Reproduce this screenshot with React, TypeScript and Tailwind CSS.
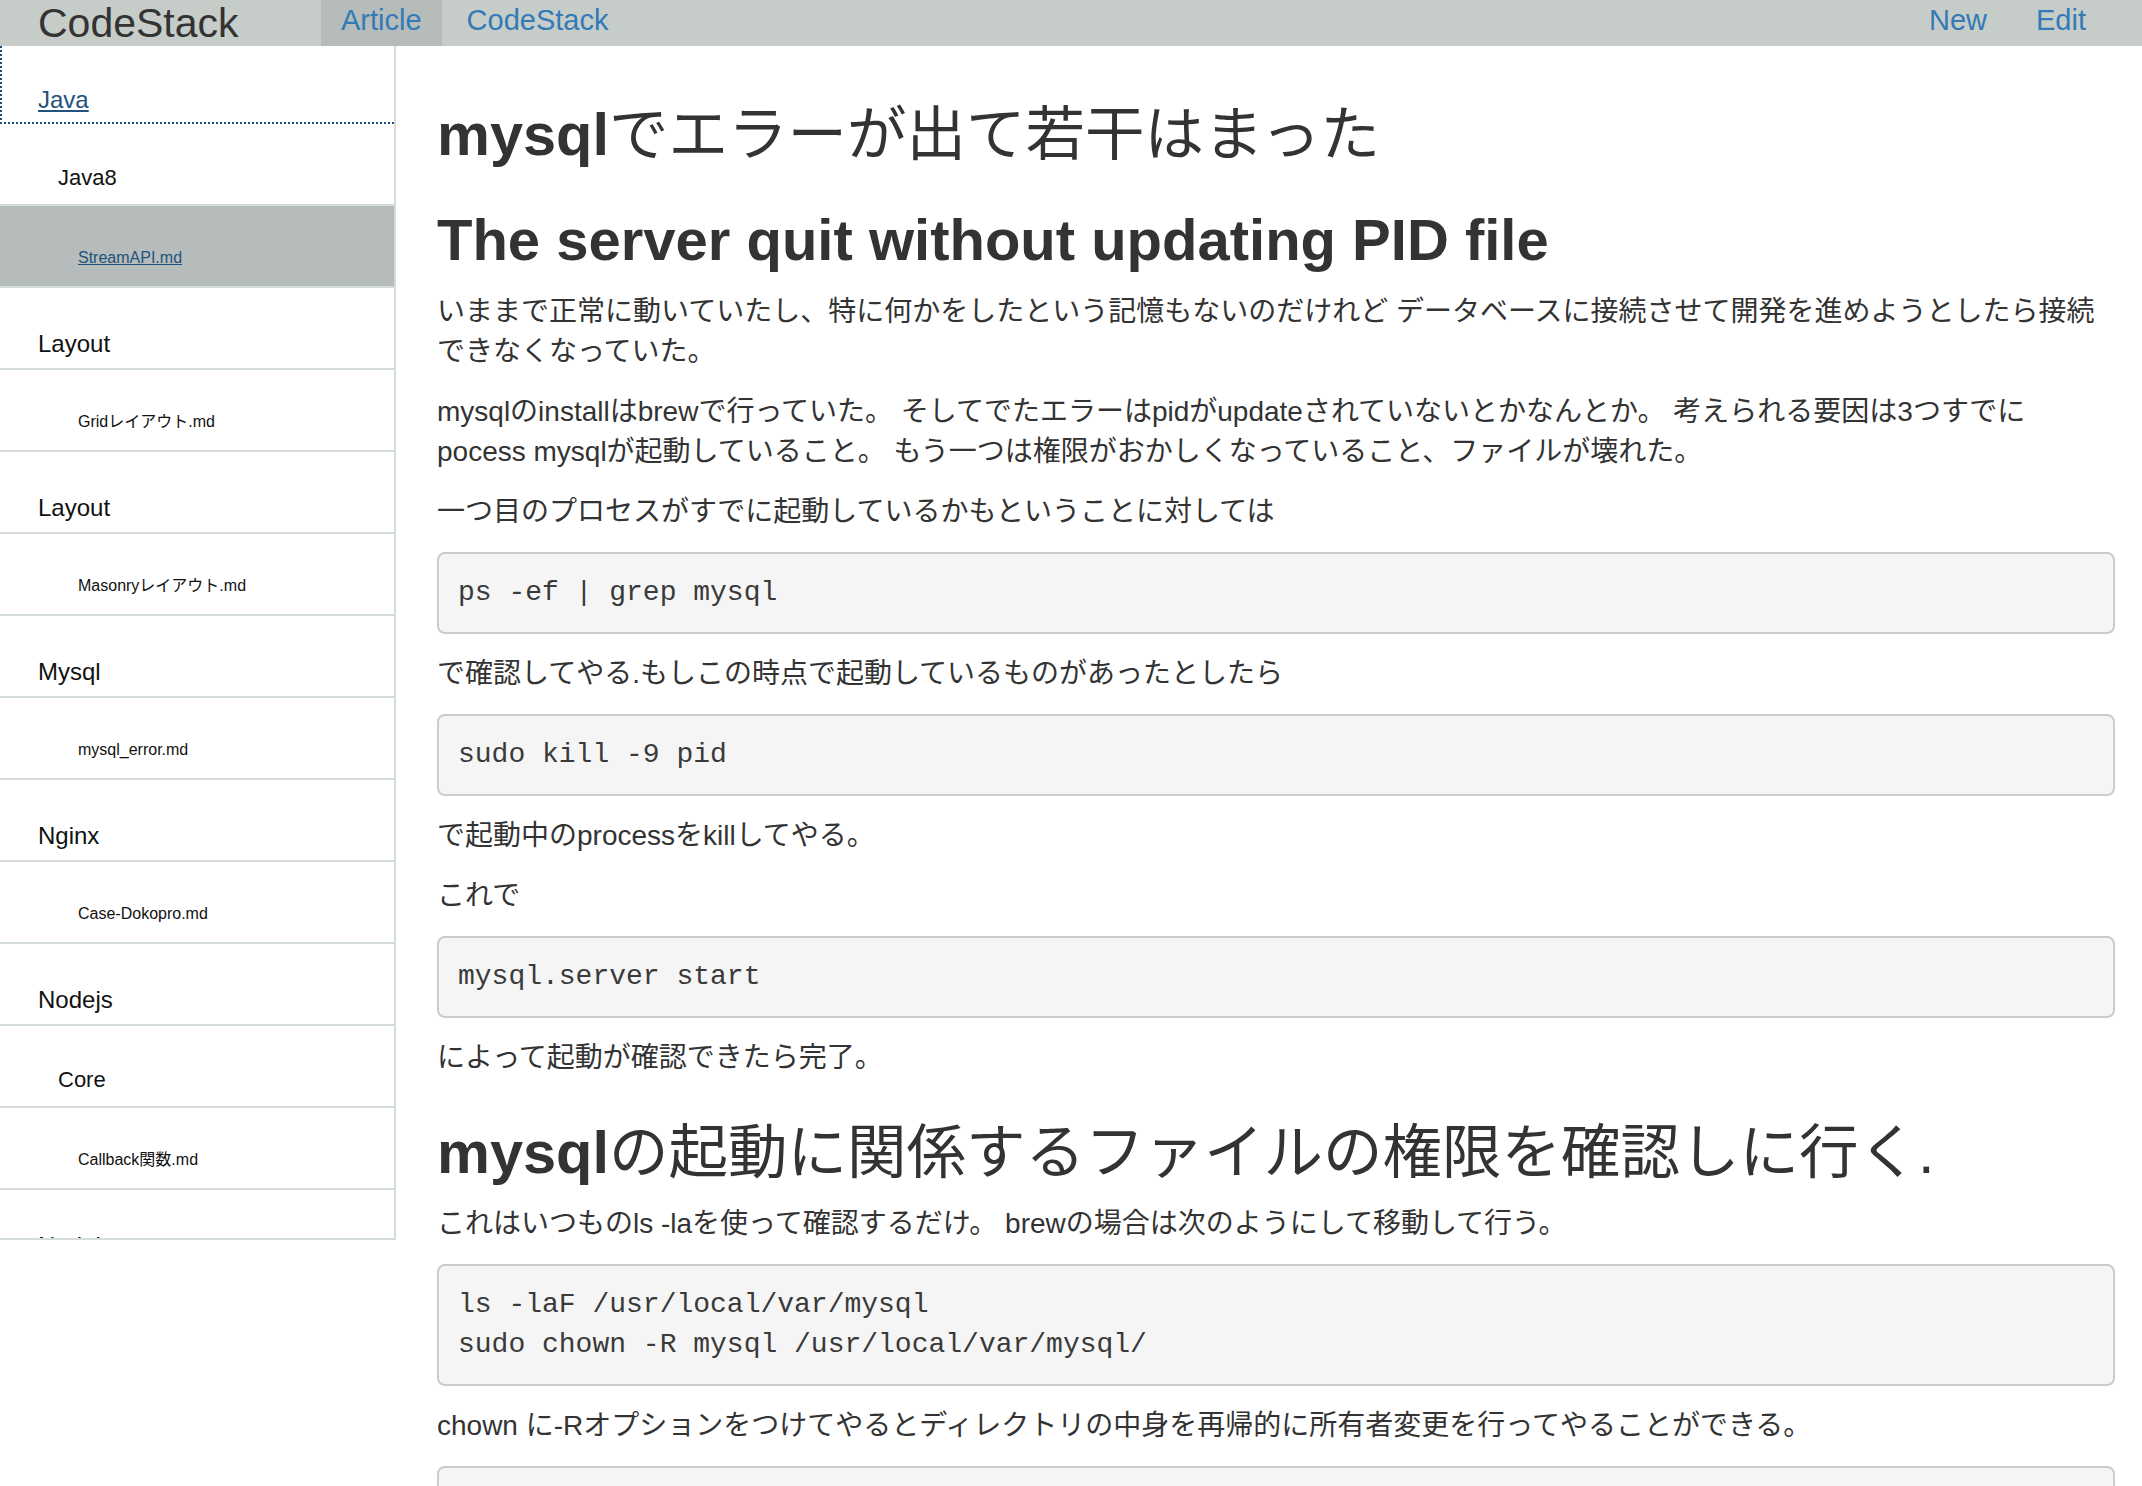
import React from 'react'

type Item = { label: string; level: 1 | 2 | 3; active?: boolean }

const items: Item[] = [
  { label: 'Java8', level: 2 },
  { label: 'StreamAPI.md', level: 3, active: true },
  { label: 'Layout', level: 1 },
  { label: 'Gridレイアウト.md', level: 3 },
  { label: 'Layout', level: 1 },
  { label: 'Masonryレイアウト.md', level: 3 },
  { label: 'Mysql', level: 1 },
  { label: 'mysql_error.md', level: 3 },
  { label: 'Nginx', level: 1 },
  { label: 'Case-Dokopro.md', level: 3 },
  { label: 'Nodejs', level: 1 },
  { label: 'Core', level: 2 },
  { label: 'Callback関数.md', level: 3 },
  { label: 'Nodejs', level: 1 },
]

const levelClass = {
  1: 'text-[24px] pl-[38px] pb-[12px]',
  2: 'text-[22px] pl-[58px] pb-[15px]',
  3: 'text-[16px] pl-[78px] pb-[20px]',
}

function P({ children }: { children: React.ReactNode }) {
  return <p className="mb-[20px] text-[28px] leading-[40px]">{children}</p>
}

function Code({ children }: { children: React.ReactNode }) {
  return (
    <pre className="mb-[20px] rounded-[8px] border-2 border-[#cccccc] bg-[#f5f5f5] px-[19px] py-[19px] font-['Liberation_Mono',monospace] text-[28px] leading-[40px] text-[#3a3a3a]">
      {children}
    </pre>
  )
}

function Sidebar() {
  return (
    <div className="flex h-[1194px] w-[396px] shrink-0 flex-col overflow-hidden border-r-2 border-b-2 border-[#d4dddb]">
      <div className="flex h-[78px] shrink-0 items-end border-l-2 border-b-2 border-dotted border-[#1f4e79] pl-[36px] pb-[10px] text-[24px] leading-none">
        <a className="text-[#23527c] underline">Java</a>
      </div>
      {items.map((item, i) => (
        <div
          key={i}
          className={`flex h-[82px] shrink-0 items-end border-b-2 border-[#d4dddb] leading-none text-[#111111] ${levelClass[item.level]} ${item.active ? 'bg-[#b6bcbb]' : ''}`}
        >
          {item.active ? (
            <a className="text-[#23527c] underline">{item.label}</a>
          ) : (
            <span>{item.label}</span>
          )}
        </div>
      ))}
    </div>
  )
}

export default function App() {
  return (
    <div className="h-[1486px] overflow-hidden bg-white font-['Liberation_Sans','Noto_Sans_CJK_JP',sans-serif] text-[#333333]">
      <header className="flex h-[46px] items-start bg-[#c6ccc8]">
        <div className="w-[321px] shrink-0 pl-[38px] text-[41px] leading-[46px] text-[#333333]">CodeStack</div>
        <a className="h-[46px] bg-[#b6bcba] px-[20px] text-[29px] leading-[40px] text-[#337ab7]">Article</a>
        <a className="pl-[25px] text-[29px] leading-[40px] text-[#337ab7]">CodeStack</a>
        <div className="ml-auto flex gap-[49px] pr-[56px] text-[29px] leading-[40px] text-[#337ab7]">
          <a>New</a>
          <a>Edit</a>
        </div>
      </header>

      <div className="flex">
        <Sidebar />

        <main className="min-w-0 flex-1 pl-[41px] pr-[27px] pt-[56px]">
          <h1 className="mb-[20px] text-[59.5px] font-normal leading-[65px]">
            <span className="font-bold">mysql</span>でエラーが出て若干はまった
          </h1>
          <h2 className="mt-[40px] mb-[20px] text-[58px] font-bold leading-[65px]">
            The server quit without updating PID file
          </h2>
          <P>
            いままで正常に動いていたし、特に何かをしたという記憶もないのだけれど データベースに接続させて開発を進めようとしたら接続
            <br />
            できなくなっていた。
          </P>
          <P>
            mysqlのinstallはbrewで行っていた。 そしてでたエラーはpidがupdateされていないとかなんとか。 考えられる要因は3つすでに
            <br />
            pocess mysqlが起動していること。 もう一つは権限がおかしくなっていること、ファイルが壊れた。
          </P>
          <P>一つ目のプロセスがすでに起動しているかもということに対しては</P>
          <Code>ps -ef | grep mysql</Code>
          <P>で確認してやる.もしこの時点で起動しているものがあったとしたら</P>
          <Code>sudo kill -9 pid</Code>
          <P>で起動中のprocessをkillしてやる。</P>
          <P>これで</P>
          <Code>mysql.server start</Code>
          <P>によって起動が確認できたら完了。</P>
          <h2 className="mt-[42px] mb-[19px] text-[59.5px] font-normal leading-[65px]">
            <span className="font-bold">mysql</span>の起動に関係するファイルの権限を確認しに行く.
          </h2>
          <P>これはいつものls -laを使って確認するだけ。 brewの場合は次のようにして移動して行う。</P>
          <Code>
            {'ls -laF /usr/local/var/mysql\nsudo chown -R mysql /usr/local/var/mysql/'}
          </Code>
          <P>chown に-Rオプションをつけてやるとディレクトリの中身を再帰的に所有者変更を行ってやることができる。</P>
          <Code>mysql.server restart</Code>
        </main>
      </div>
    </div>
  )
}
